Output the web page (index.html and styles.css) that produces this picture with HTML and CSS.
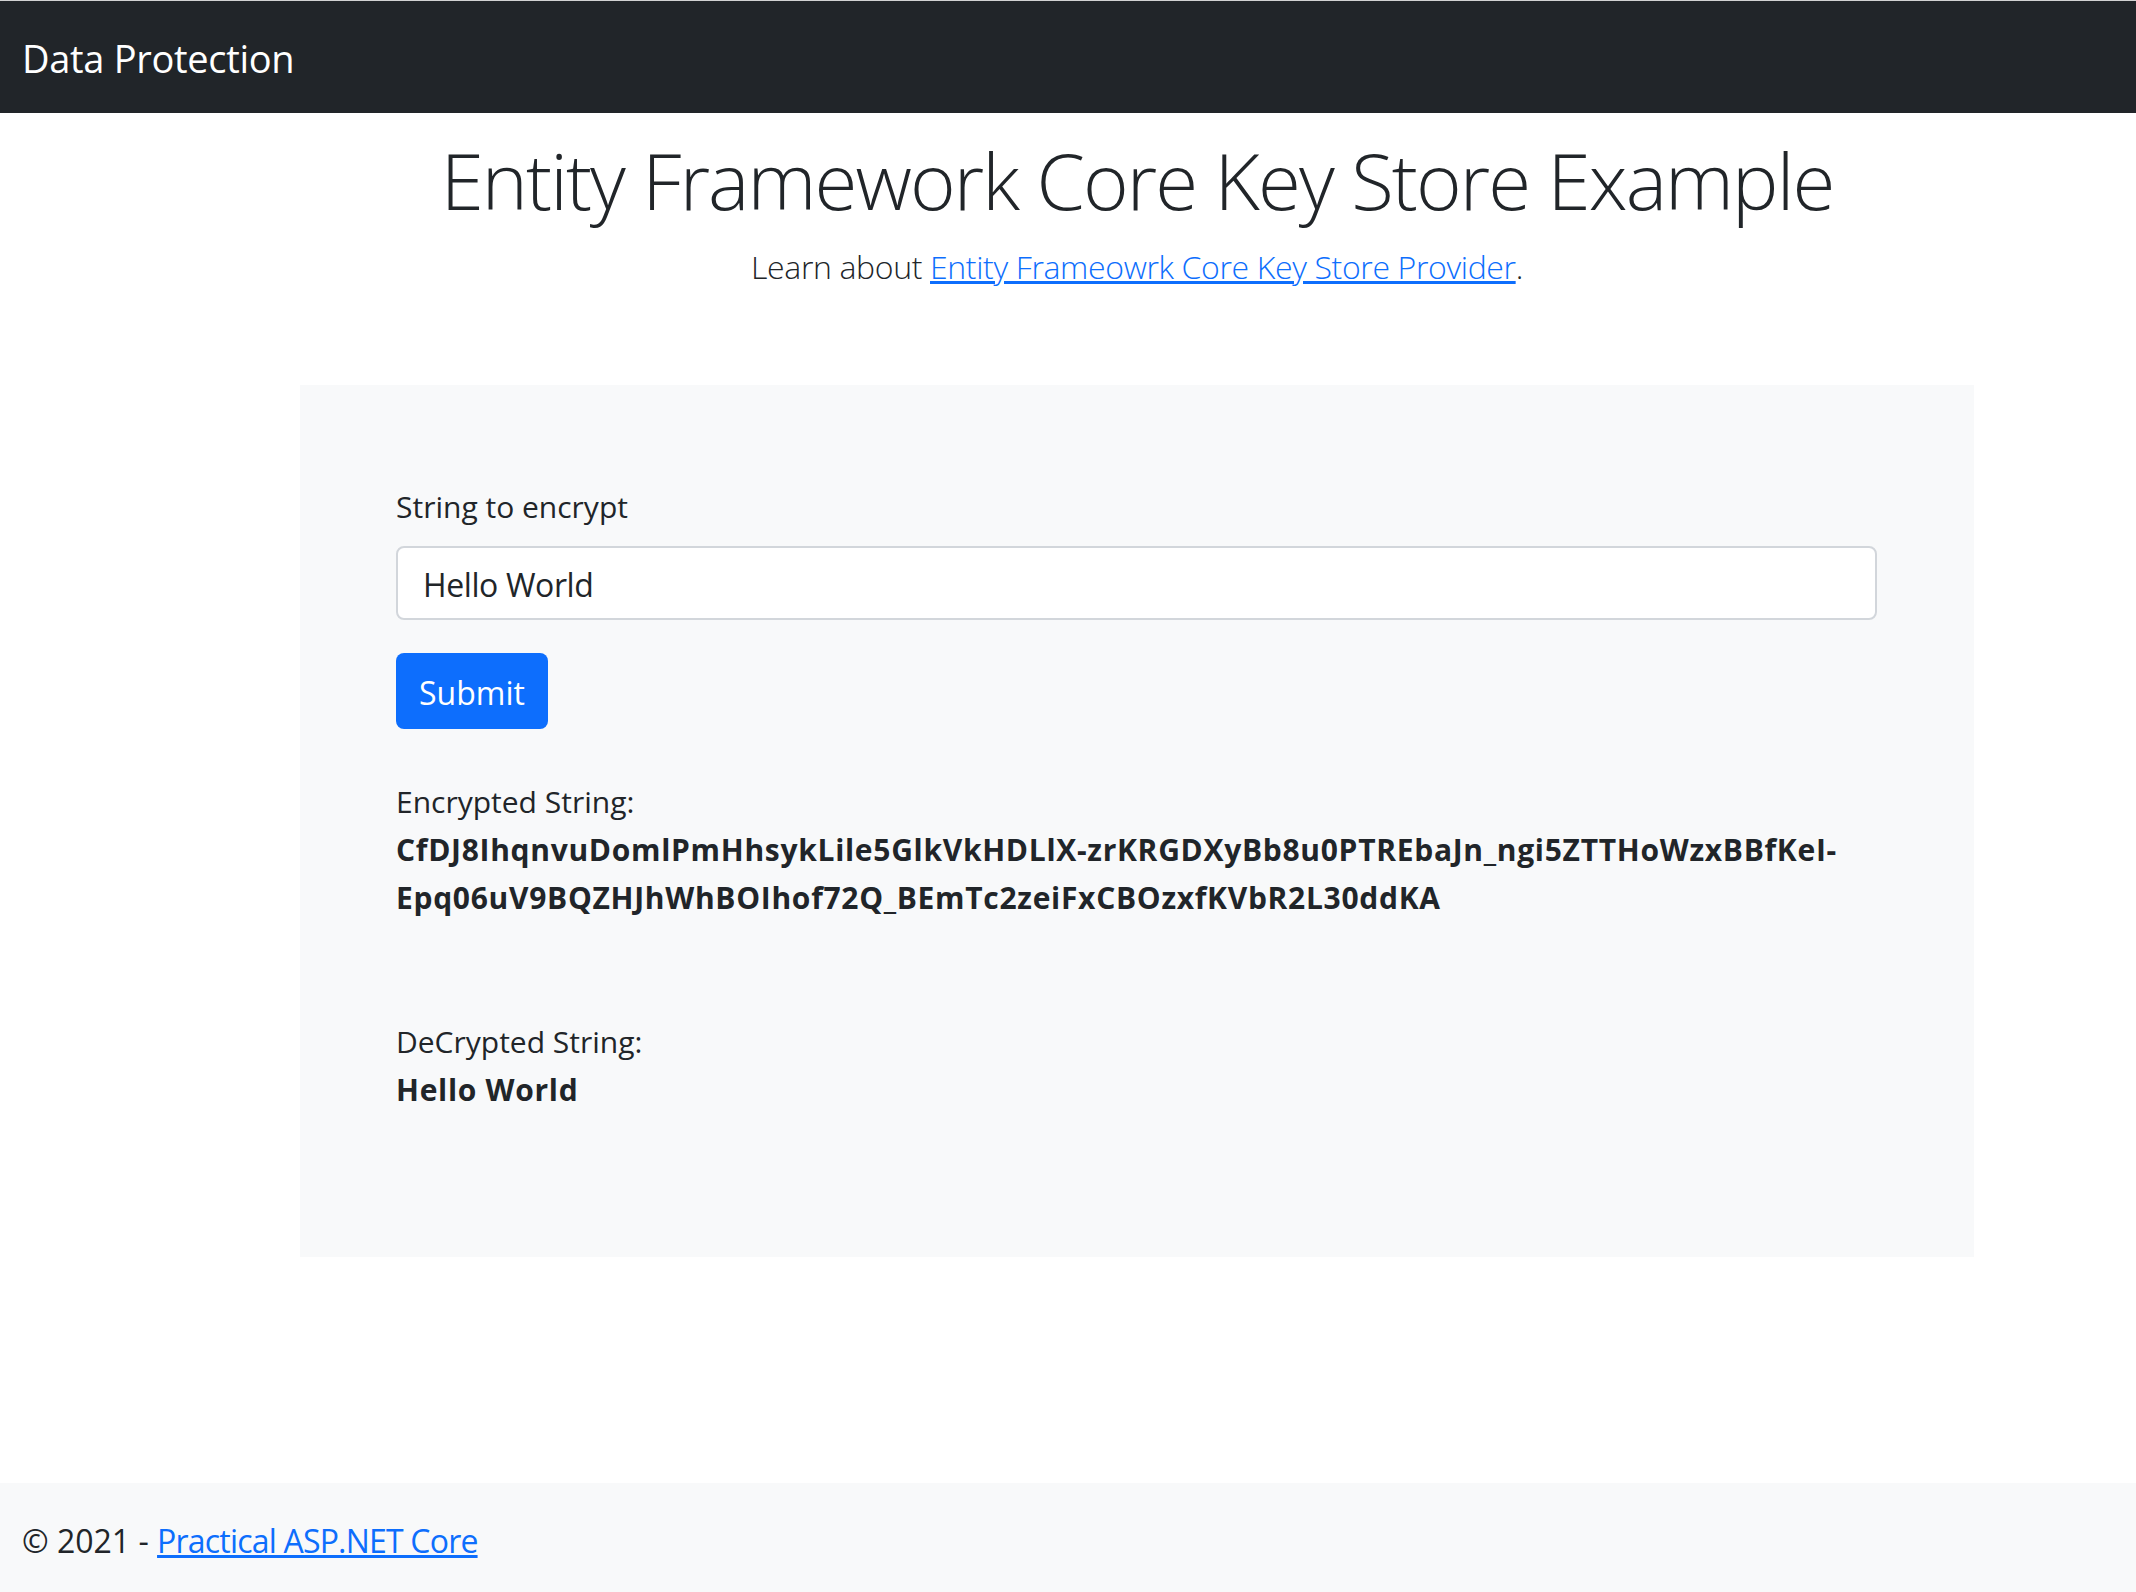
FILE: index.html
```html
<!DOCTYPE html>
<html lang="en">
<head>
<meta charset="utf-8">
<title>Data Protection</title>
<link rel="stylesheet" href="styles.css">
</head>
<body>
<header class="navbar">
  <a class="brand" href="#">Data Protection</a>
</header>
<main class="main">
  <div class="intro">
    <h1 class="display">Entity Framework Core Key Store Example</h1>
    <p class="lead">Learn about <a href="#">Entity Frameowrk Core Key Store Provider</a>.</p>
  </div>
  <section class="panel">
    <form class="form">
      <label class="label" for="plain">String to encrypt</label>
      <input class="input" id="plain" type="text" value="Hello World">
      <button class="btn" type="button">Submit</button>
    </form>
    <p class="result enc">Encrypted String:<br><strong>CfDJ8IhqnvuDomlPmHhsykLile5GlkVkHDLlX-zrKRGDXyBb8u0PTREbaJn_ngi5ZTTHoWzxBBfKeI-Epq06uV9BQZHJhWhBOIhof72Q_BEmTc2zeiFxCBOzxfKVbR2L30ddKA</strong></p>
    <p class="result dec">DeCrypted String:<br><strong>Hello World</strong></p>
  </section>
</main>
<footer class="footer">
  &copy; 2021 - <a class="footer-link" href="#">Practical ASP.NET Core</a>
</footer>
</body>
</html>
```
FILE: styles.css
```css
* { box-sizing: border-box; }
html, body { margin: 0; padding: 0; }
body {
  font-family: "Open Sans", "Noto Sans", sans-serif;
  color: #212529;
  background: #fff;
}
a { color: #0d6efd; }

.navbar {
  display: flex;
  align-items: center;
  height: 113px;
  border-top: 1px solid #d2d2d2;
  background: #212529;
  padding: 2px 0 0 22px;
}
.brand {
  color: #fff;
  text-decoration: none;
  font-size: 38px;
  line-height: 48px;
  letter-spacing: -0.3px;
}

.main {
  width: 1674px;
  margin: 0 0 226px 300px;
}
.intro { text-align: center; }
.display {
  margin: 19px 0 0;
  font-size: 78px;
  line-height: 96px;
  font-weight: 300;
  letter-spacing: -1.9px;
}
.lead {
  margin: 15px 0 0;
  font-size: 32px;
  line-height: 48px;
  font-weight: 300;
  letter-spacing: -0.36px;
}

.panel {
  margin-top: 94px;
  height: 872px;
  background: #f8f9fa;
  padding: 99px 97px 0 96px;
}
.form { display: flex; flex-direction: column; align-items: flex-start; }
.label {
  font-size: 30px;
  line-height: 45px;
}
.input {
  margin-top: 17px;
  width: 100%;
  height: 74px;
  border: 2px solid #d2d6db;
  border-radius: 8px;
  background: #fff;
  padding: 2px 25px 0;
  font-family: inherit;
  font-size: 32px;
  line-height: 68px;
  letter-spacing: -0.4px;
  color: #212529;
  outline: none;
}
.btn {
  margin-top: 33px;
  width: 152px;
  height: 76px;
  border: 0;
  border-radius: 8px;
  background: #0d6efd;
  color: #fff;
  font-family: inherit;
  font-size: 32px;
  line-height: 76px;
  padding: 2px 0 0;
  text-align: center;
}
.result {
  margin: 0;
  font-size: 30px;
  line-height: 48px;
}
.result strong { font-weight: 700; letter-spacing: 0.7px; }
.enc { margin-top: 49px; }
.dec { margin-top: 96px; }

.footer {
  height: 109px;
  background: #f8f9fa;
  padding: 34px 0 0 22px;
  font-size: 32px;
  line-height: 48px;
}
.footer-link { letter-spacing: -0.8px; }
```
